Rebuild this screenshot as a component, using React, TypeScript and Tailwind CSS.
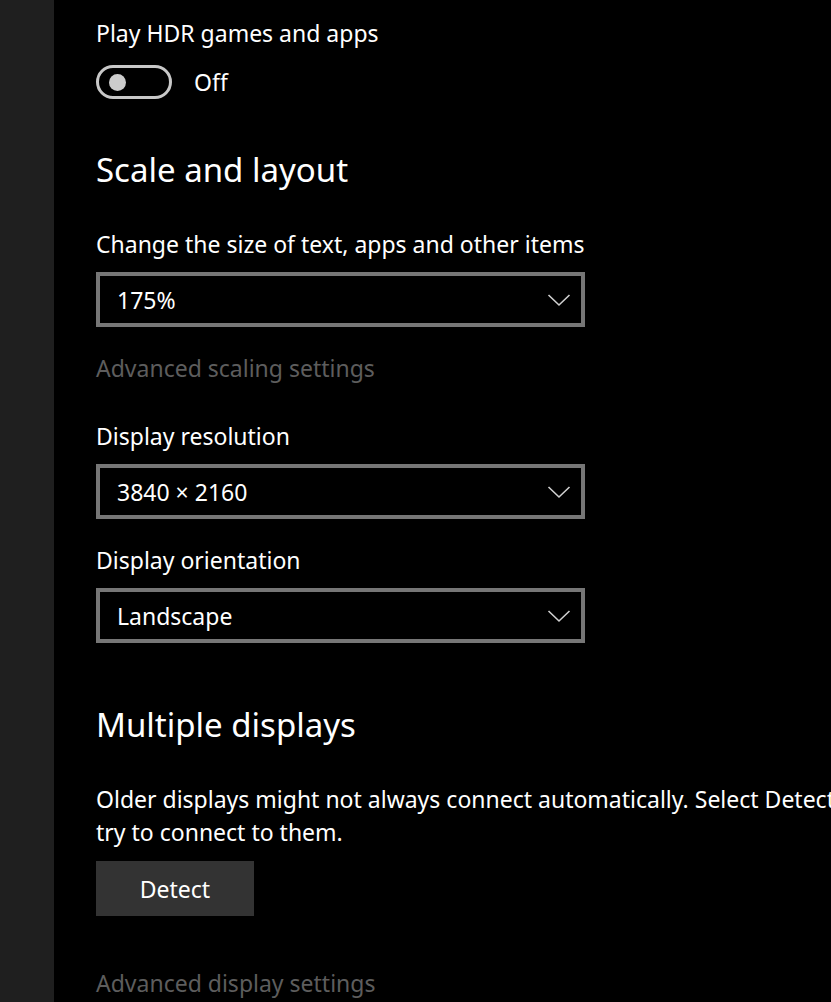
function Dropdown({value}: {value: string}) {
	return (
		<div className="flex h-[55px] w-[489px] items-center justify-between border-4 border-[#767676] pl-[17px] pr-[10px]">
			<span className="leading-[32px]">{value}</span>
			<svg width="24" height="14" viewBox="0 0 24 14" fill="none">
				<path d="M1.5 2 L12 12 L22.5 2" stroke="#d0d0d0" strokeWidth="1.6" />
			</svg>
		</div>
	);
}

export default function App() {
	return (
		<div
			className="flex h-[1002px] w-[831px] overflow-hidden bg-black text-[23px] text-white"
			style={{fontFamily: '"Noto Sans", "Open Sans", sans-serif'}}>
			<div className="w-[54px] shrink-0 bg-[#1f1f1f]" />
			<div className="flex flex-col pl-[42px]">
				<p className="mt-[17px] leading-[32px]">Play HDR games and apps</p>
				<div className="mt-[16px] flex items-center gap-[22px]">
					<div className="flex h-[34px] w-[76px] items-center rounded-full border-[3px] border-[#c8c8c8] pl-[10px]">
						<div className="h-[17px] w-[17px] rounded-full bg-[#cccccc]" />
					</div>
					<span className="leading-[32px]">Off</span>
				</div>

				<h2 className="mt-[51px] text-[33px] leading-[40px]">Scale and layout</h2>

				<p className="mt-[38px] leading-[32px]">Change the size of text, apps and other items</p>
				<div className="mt-[12px]">
					<Dropdown value="175%" />
				</div>
				<p className="mt-[25px] leading-[32px] text-[#5d5d5d]">Advanced scaling settings</p>

				<p className="mt-[36px] leading-[32px]">Display resolution</p>
				<div className="mt-[12px]">
					<Dropdown value="3840 × 2160" />
				</div>
				<p className="mt-[25px] leading-[32px]">Display orientation</p>
				<div className="mt-[12px]">
					<Dropdown value="Landscape" />
				</div>

				<h2 className="mt-[62px] text-[33px] leading-[40px]">Multiple displays</h2>

				<p className="mt-[38px] whitespace-nowrap leading-[33px]">
					Older displays might not always connect automatically. Select Detect to
					<br />
					try to connect to them.
				</p>
				<button className="mt-[12px] h-[55px] w-[158px] bg-[#333333] leading-[32px] text-white">Detect</button>
				<p className="mt-[51px] leading-[32px] text-[#5d5d5d]">Advanced display settings</p>
			</div>
		</div>
	);
}
